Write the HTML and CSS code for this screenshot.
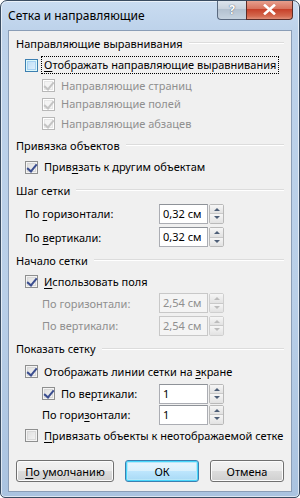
FILE: index.html
```html
<!DOCTYPE html>
<html lang="ru">
<head>
<meta charset="utf-8">
<link rel="stylesheet" href="styles.css">
</head>
<body>
<div class="window">
  <div class="titlebar">
    <span class="title">Сетка и направляющие</span>
    <div class="caption-btns">
      <div class="cbtn help"><span>?</span></div>
      <div class="cbtn close">
        <svg width="13" height="11" viewBox="0 0 13 11"><path d="M2 1.5 L11 9.5 M11 1.5 L2 9.5" stroke="#fff" stroke-width="2.6" stroke-linecap="square"/><path d="M2 1.5 L11 9.5 M11 1.5 L2 9.5" stroke="#fff" stroke-width="1.6"/></svg>
      </div>
    </div>
  </div>
  <div class="client">
    <div class="group h22"><span>Направляющие выравнивания</span><i></i></div>
    <div class="row h22 ind1"><span class="cb hot"></span><span class="lbl focus"><u>О</u>тображать направляющие выравнивания</span></div>
    <div class="row h19 ind2 dis"><span class="cb checked disabled"></span><span class="lbl">Направляющие страниц</span></div>
    <div class="row h18 ind2 dis"><span class="cb checked disabled"></span><span class="lbl">Направляющие полей</span></div>
    <div class="row h21 ind2 dis"><span class="cb checked disabled"></span><span class="lbl">Направляющие абзацев</span></div>
    <div class="group h22"><span>Привязка объектов</span><i></i></div>
    <div class="row h22 ind1"><span class="cb checked"></span><span class="lbl">Прив<u>я</u>зать к другим объектам</span></div>
    <div class="group h24"><span>Шаг сетки</span><i></i></div>
    <div class="row h23 ind1 field"><span class="flbl">По <u>г</u>оризонтали:</span><span class="spin"><span class="val">0,32 см</span><span class="arrows"><b class="up"></b><b class="dn"></b></span></span></div>
    <div class="row h24 ind1 field"><span class="flbl">По <u>в</u>ертикали:</span><span class="spin"><span class="val">0,32 см</span><span class="arrows"><b class="up"></b><b class="dn"></b></span></span></div>
    <div class="group h22"><span>Начало сетки</span><i></i></div>
    <div class="row h21 ind1"><span class="cb checked"></span><span class="lbl"><u>И</u>спользовать поля</span></div>
    <div class="row h22 ind2 field dis"><span class="flbl">По горизонтали:</span><span class="spin disabled"><span class="val">2,54 см</span><span class="arrows"><b class="up"></b><b class="dn"></b></span></span></div>
    <div class="row h23 ind2 field dis"><span class="flbl">По вертикали:</span><span class="spin disabled"><span class="val">2,54 см</span><span class="arrows"><b class="up"></b><b class="dn"></b></span></span></div>
    <div class="group h23"><span>Показать сетку</span><i></i></div>
    <div class="row h23 ind1"><span class="cb checked"></span><span class="lbl">Отображать линии сетки на <u>э</u>кране</span></div>
    <div class="row h21 ind2 field"><span class="cb checked"></span><span class="flbl2">По вер<u>т</u>икали:</span><span class="spin"><span class="val">1</span><span class="arrows"><b class="up"></b><b class="dn"></b></span></span></div>
    <div class="row h21 ind2 field"><span class="flbl">По гори<u>з</u>онтали:</span><span class="spin"><span class="val">1</span><span class="arrows"><b class="up"></b><b class="dn"></b></span></span></div>
    <div class="row h21 ind1"><span class="cb"></span><span class="lbl"><u>П</u>ривязать объекты к неотображаемой сетке</span></div>
    <div class="buttons">
      <div class="btn"><span><u>П</u>о умолчанию</span></div>
      <div class="btn default"><span>ОК</span></div>
      <div class="btn"><span>Отмена</span></div>
    </div>
  </div>
</div>
</body>
</html>
```
FILE: styles.css
```css
* { box-sizing: border-box; }
html, body { margin: 0; padding: 0; }
body {
  width: 300px; height: 498px; overflow: hidden;
  font-family: "Noto Sans", "Open Sans", sans-serif;
  font-size: 11px; color: #000;
  background: #fff;
  white-space: nowrap;
}
u { text-decoration: underline; text-underline-offset: 2px; }
.window {
  width: 300px; height: 498px;
  border: 1px solid #3a4c61;
  border-radius: 7px 7px 5px 5px;
  background: linear-gradient(to bottom, #c9dcf1 0, #bdd2ea 30px, #b9cfe8 60%, #aac3e0 100%);
  box-shadow: inset 0 0 0 1px rgba(255,255,255,0.6);
  display: flex; flex-direction: column;
  overflow: hidden;
}
.titlebar {
  height: 29px; display: flex; align-items: flex-start;
  padding-left: 7px;
}
.title { margin-top: 6px; font-size: 12px; color: #000; }
.caption-btns { margin-left: auto; margin-right: 6px; display: flex; margin-top: -1px; }
.cbtn {
  height: 20px; display: flex; align-items: center; justify-content: center;
  border: 1px solid #5a6a80; border-top: none;
}
.cbtn.help {
  width: 29px; border-radius: 0 0 0 4px;
  background: linear-gradient(to bottom, #dfe6ee 0, #c9d3de 45%, #b3c1d0 50%, #c6d3e0 100%);
  border-right: none;
}
.cbtn.help span { color: #fff; font-weight: bold; font-size: 12px; text-shadow: 0 0 1px #59667a, 0 0 1px #59667a; margin-top: -1px; }
.cbtn.close {
  width: 47px; border-radius: 0 0 4px 0;
  background: linear-gradient(to bottom, #e8a493 0, #d8745f 45%, #c7412a 50%, #d4694f 85%, #e0907a 100%);
  border-color: #5b2d28;
}
.client {
  flex: 1; margin: 0 7px 5px 7px;
  background: #f0f0f0;
  border: 1px solid #8a9db6;
  padding: 1px 7px 0 7px;
  display: flex; flex-direction: column;
}
.h18 { height: 18px; } .h19 { height: 19px; }
.h20 { height: 20px; } .h21 { height: 21px; } .h22 { height: 22px; } .h23 { height: 23px; } .h24 { height: 24px; }
.group { display: flex; align-items: center; padding-left: 0; }
.group i { flex: 1; height: 2px; background: #dcdcdc; margin-left: 6px; margin-right: 0; border-bottom: 1px solid #fff; }
.row { display: flex; align-items: center; }
.ind1 { padding-left: 9px; }
.ind2 { padding-left: 26px; }
.dis { color: #8f8f8f; }
.cb {
  width: 13px; height: 13px; flex: none;
  border: 1px solid #8e8f8f;
  background: linear-gradient(135deg, #dcdcdc 0, #f6f6f6 100%);
  box-shadow: inset 0 0 0 1px #f4f4f4, inset 0 0 0 2px #d8d8d8;
  margin-right: 3px; position: relative;
}
.cb.hot { border-color: #3c7fb1; background: linear-gradient(135deg, #b9dcf7 0, #e4f2fd 100%); box-shadow: inset 0 0 0 1px #def9fa, inset 0 0 0 2px #a6d1f2; }
.cb.checked::after {
  content: ""; position: absolute; left: 3px; top: 0px;
  width: 4px; height: 8px;
  border: solid #3a4d8f; border-width: 0 2px 2px 0;
  transform: rotate(40deg);
}
.cb.disabled { border-color: #b8b8b8; background: #f4f4f4; box-shadow: inset 0 0 0 1px #fff, inset 0 0 0 2px #e6e6e6; }
.cb.disabled::after { border-color: #c4c4c4; }
.lbl { padding: 1px 2px; border: 1px solid transparent; line-height: 14px; }
.lbl.focus { border: 1px dotted #000; }
.flbl { width: 134px; flex: none; }
.ind2 .flbl { width: 117px; }
.flbl2 { width: 101px; flex: none; padding-left: 3px; }
.spin { display: flex; align-items: stretch; height: 20px; gap: 1px; }
.spin .val {
  width: 49px; border: 1px solid #abadb3; border-top-color: #8e9298; background: #fff;
  padding-left: 3px; display: flex; align-items: center; line-height: 14px;
}
.spin .arrows {
  width: 15px; border: 1px solid #b9b9b9; border-radius: 2px;
  display: flex; flex-direction: column; background: #f2f2f2;
}
.spin .arrows b {
  flex: 1; position: relative;
  background: linear-gradient(to bottom, #f6f6f6, #e2e2e2);
}
.spin .arrows b.up { border-bottom: 1px solid #c9c9c9; }
.spin .arrows b::after {
  content: ""; position: absolute; left: 4px; top: 3px;
  border-left: 3px solid transparent; border-right: 3px solid transparent;
}
.spin .arrows b.up::after { border-bottom: 3px solid #4d5e77; }
.spin .arrows b.dn::after { border-top: 3px solid #4d5e77; top: 2px; }
.spin.disabled .val { background: #f4f4f4; border-color: #c8c8c8; color: #8f8f8f; }
.spin.disabled .arrows { border-color: #cfcfcf; }
.spin.disabled .arrows b::after { border-bottom-color: #bcbcbc; border-top-color: #bcbcbc; }
.buttons { display: flex; justify-content: space-between; margin-top: auto; margin-bottom: 9px; }
.btn {
  width: 74px; height: 22px;
  border: 1px solid #707070; border-radius: 3px;
  background: linear-gradient(to bottom, #f2f2f2 0, #ebebeb 50%, #dddddd 50%, #cfcfcf 100%);
  box-shadow: inset 0 0 0 1px #fcfcfc;
  display: flex; align-items: center; justify-content: center;
}
.btn:first-child { width: 98px; }
.btn.default {
  border-color: #3c7fb1;
  box-shadow: inset 0 0 0 1px #48d7fb, inset 0 0 0 2px #b9e6f8;
  background: linear-gradient(to bottom, #eaf6fd 0, #d9f0fc 50%, #bee6fd 50%, #a7d9f5 100%);
}
```
